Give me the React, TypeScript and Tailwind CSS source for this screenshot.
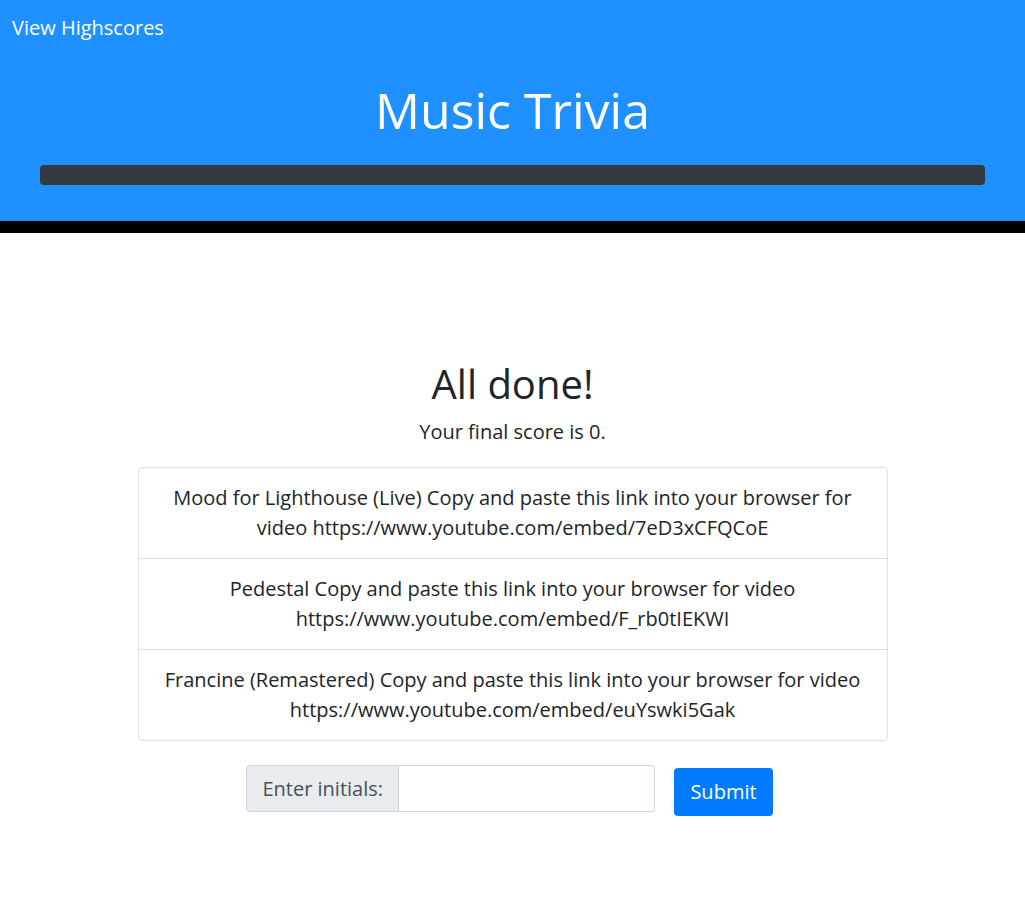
export default function App() {
  const songs = [
    'Mood for Lighthouse (Live) Copy and paste this link into your browser for video https://www.youtube.com/embed/7eD3xCFQCoE',
    'Pedestal Copy and paste this link into your browser for video https://www.youtube.com/embed/F_rb0tIEKWI',
    'Francine (Remastered) Copy and paste this link into your browser for video https://www.youtube.com/embed/euYswki5Gak',
  ]

  return (
    <div className="min-h-screen bg-white text-[#212529] font-['Open_Sans',sans-serif]">
      <header className="bg-[#1e90ff] border-b-[12px] border-black">
        <div className="px-3 pt-[14px] text-[20px] leading-[28px] text-white">View Highscores</div>
        <h1 className="mt-[40px] text-center text-[50px] leading-[56px] font-normal text-white">Music Trivia</h1>
        <div className="px-10 pt-[27px] pb-[36px]">
          <div className="h-5 rounded bg-[#343a40]" />
        </div>
      </header>

      <main className="pt-[127px] flex flex-col items-center">
        <h2 className="text-[40px] leading-[48px] font-normal">All done!</h2>
        <p className="mt-[9px] text-[20px] leading-[30px]">Your final score is 0.</p>
        <ul className="mt-[20px] w-[750px] border border-[#dfdfdf] rounded">
          {songs.map((s, i) => (
            <li
              key={i}
              className={`px-5 py-[15px] text-center text-[20px] leading-[30px] ${i > 0 ? 'border-t border-[#dfdfdf]' : ''}`}
            >
              {s}
            </li>
          ))}
        </ul>
        <div className="mt-[24px] flex items-start gap-[19px] ml-[-6px]">
          <div className="flex h-[47px] w-[409px]">
            <span className="flex items-center px-[15px] bg-[#e9ecef] border border-[#ced4da] rounded-l text-[20px] text-[#495057]">
              Enter initials:
            </span>
            <input className="flex-1 min-w-0 border border-l-0 border-[#ced4da] rounded-r outline-none px-3" />
          </div>
          <button className="mt-[3px] h-[48px] px-4 rounded bg-[#007bff] text-white text-[20px]">Submit</button>
        </div>
      </main>
    </div>
  )
}
